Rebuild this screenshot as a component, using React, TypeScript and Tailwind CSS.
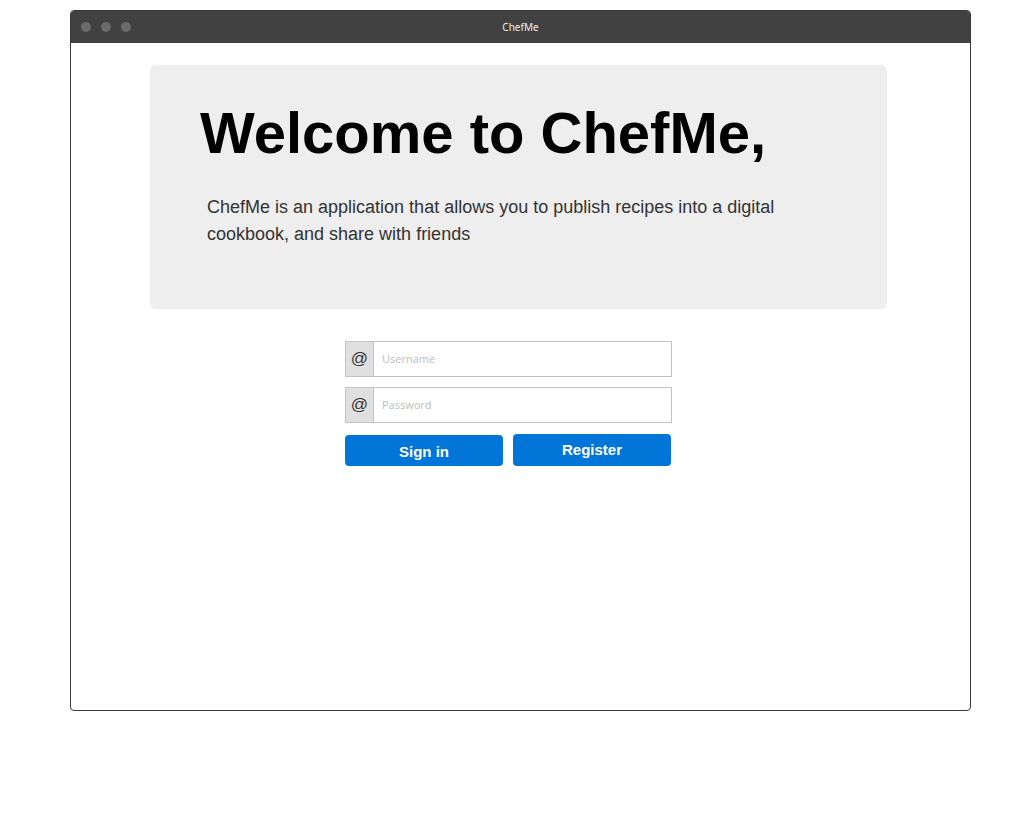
import React from "react";

export default function App() {
  return (
    <div className="w-[1020px] h-[820px] bg-white pt-[10px] pl-[70px]" style={{ fontFamily: '"Liberation Sans", Arial, sans-serif' }}>
      <div className="w-[901px] h-[701px] border border-[#3a3a3a] rounded-[4px] overflow-hidden flex flex-col bg-white">
        <div className="h-[32px] bg-[#414141] relative flex items-center shrink-0">
          <div className="flex gap-[10px] pl-[10px]">
            <div className="w-[10px] h-[10px] rounded-full bg-[#6a6a6a]" />
            <div className="w-[10px] h-[10px] rounded-full bg-[#6a6a6a]" />
            <div className="w-[10px] h-[10px] rounded-full bg-[#6a6a6a]" />
          </div>
          <div className="absolute inset-0 flex items-center justify-center text-[10px] text-[#ececec]" style={{ fontFamily: '"Noto Sans", sans-serif' }}>
            ChefMe
          </div>
        </div>
        <div className="flex-1 pt-[22px]">
          <div className="ml-[79px] w-[737px] h-[244px] bg-[#eeeeee] rounded-[6px] pl-[50px] pt-[32px]">
            <h1 className="text-[58px] font-bold text-black leading-[72px]">Welcome to ChefMe,</h1>
            <p className="mt-[25px] ml-[7px] w-[590px] text-[18px] leading-[27px] text-[#333333]">
              ChefMe is an application that allows you to publish recipes into a digital cookbook, and share with friends
            </p>
          </div>
          <div className="ml-[274px] mt-[32px] w-[327px] flex flex-col">
            <div className="flex h-[36px] border border-[#c4c4c4]">
              <div className="w-[28px] bg-[#e0e0e0] border-r border-[#c4c4c4] flex items-center justify-center text-[17px] text-[#333]">@</div>
              <input className="flex-1 px-[8px] text-[11px] outline-none placeholder:text-[#bdbdbd]" style={{ fontFamily: '"Open Sans", sans-serif' }} placeholder="Username" />
            </div>
            <div className="flex h-[36px] border border-[#c4c4c4] mt-[10px]">
              <div className="w-[28px] bg-[#e0e0e0] border-r border-[#c4c4c4] flex items-center justify-center text-[17px] text-[#333]">@</div>
              <input className="flex-1 px-[8px] text-[11px] outline-none placeholder:text-[#bdbdbd]" style={{ fontFamily: '"Open Sans", sans-serif' }} placeholder="Password" type="password" />
            </div>
            <div className="flex gap-[10px] mt-[11px] items-end">
              <button className="w-[158px] h-[31px] bg-[#0275d8] rounded-[4px] text-white font-bold text-[15px] pt-[3px]">Sign in</button>
              <button className="w-[158px] h-[32px] bg-[#0275d8] rounded-[4px] text-white font-bold text-[15px]">Register</button>
            </div>
          </div>
        </div>
      </div>
    </div>
  );
}
